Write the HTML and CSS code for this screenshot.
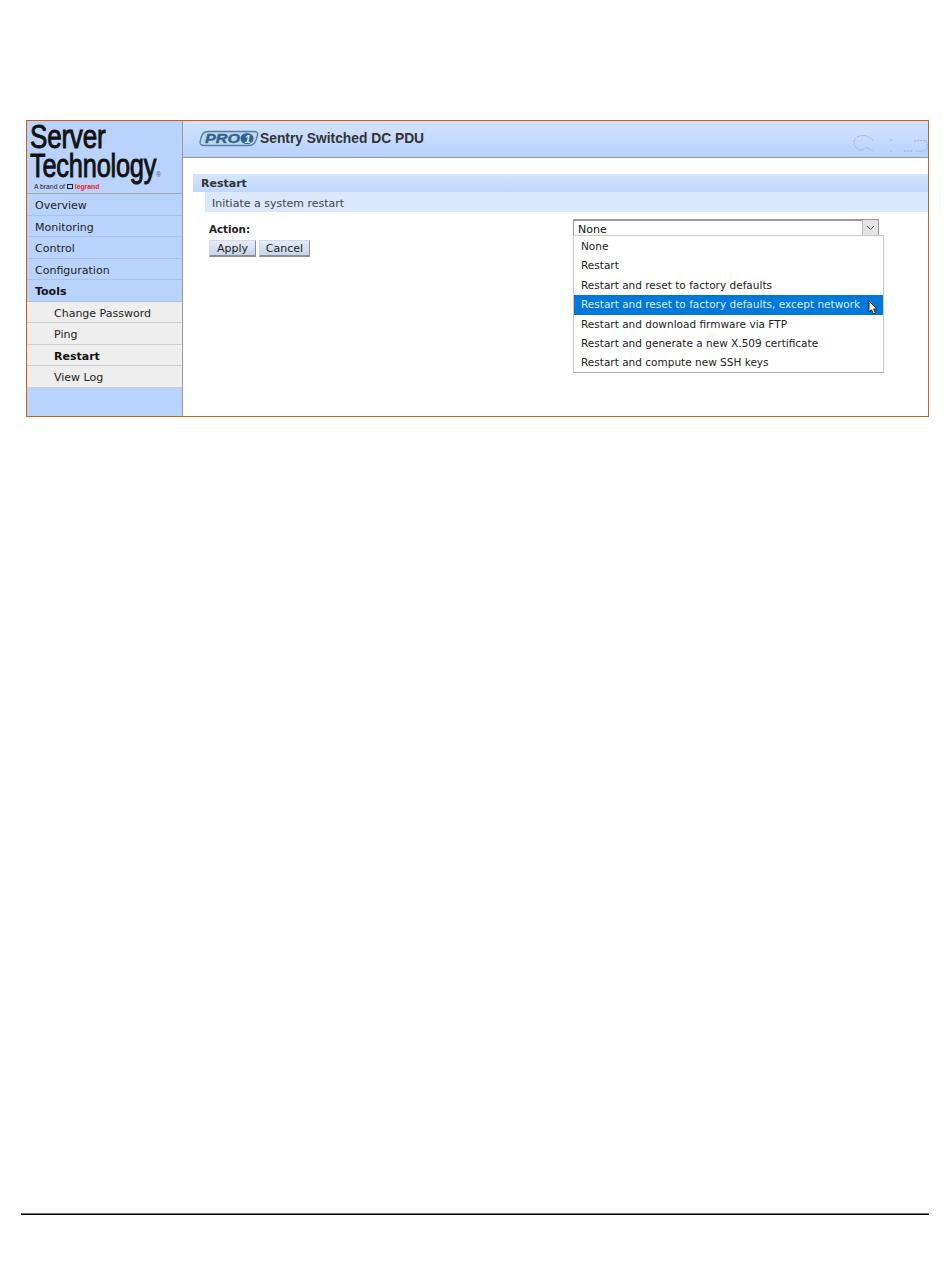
FILE: index.html
```html
<!DOCTYPE html>
<html lang="en">
<head>
<meta charset="utf-8">
<title>Restart</title>
<link rel="stylesheet" href="styles.css">
</head>
<body>
<div class="page">
  <div class="frame">
    <aside class="sidebar">
      <div class="logo">
        <div class="logo-name logo-first">Server</div>
        <div class="logo-name logo-second">Technology<span class="logo-reg">®</span></div>
        <div class="logo-brand">A brand of <span class="logo-box"></span> <span class="logo-red">legrand</span></div>
      </div>
      <nav class="nav">
        <div class="nav-item">Overview</div>
        <div class="nav-item">Monitoring</div>
        <div class="nav-item">Control</div>
        <div class="nav-item">Configuration</div>
        <div class="nav-item nav-bold">Tools</div>
        <div class="nav-item sub">Change Password</div>
        <div class="nav-item sub">Ping</div>
        <div class="nav-item sub nav-bold">Restart</div>
        <div class="nav-item sub">View Log</div>
      </nav>
    </aside>
    <main class="main">
      <header class="header">
        <svg class="pro-logo" width="60" height="17" viewBox="0 0 60 17" aria-hidden="true">
          <path d="M9 1.500H55Q59.500 1.500 58.500 5L57 10Q55 15.500 50 15.500H5Q.5 15.500 1.200 11.500L2.500 6.500Q4 1.500 9 1.500Z" fill="#c3d6e9" stroke="#4f7fa6" stroke-width="1.300"/>
          <text x="6" y="13" class="pro-text" textLength="35" lengthAdjust="spacingAndGlyphs">PRO</text>
          <ellipse cx="48" cy="8.500" rx="6.500" ry="5.500" fill="#2f6493"/>
          <text x="45.500" y="12.500" class="pro-one">1</text>
        </svg>
        <h1 class="title">Sentry Switched DC PDU</h1>
        <svg class="ghost" width="76" height="20" viewBox="0 0 76 20" aria-hidden="true">
          <path d="M21 7Q14 1 8 3Q3 4 2 9Q2 15 8 17Q12 17 14 14Q17 16 21 18M38 7H41M39 18V19M52 18H60M62 8Q70 7 74 8Q76 12 75 16Q72 19 64 18" fill="none" stroke="#a3b0c6" stroke-width="1" stroke-dasharray="2 1"/>
        </svg>
      </header>
      <section class="content">
        <h2 class="section-title">Restart</h2>
        <p class="section-desc">Initiate a system restart</p>
        <form class="form">
          <div class="action-row">
            <span class="action-label">Action:</span>
            <div class="select-wrap">
              <div class="select">
                <span class="select-value">None</span>
                <span class="select-arrow">
                  <svg width="9" height="6" viewBox="0 0 9 6" aria-hidden="true"><path d="M1 1L4.500 4.500L8 1" fill="none" stroke="#555" stroke-width="1"/></svg>
                </span>
              </div>
              <ul class="options">
                <li class="option">None</li>
                <li class="option">Restart</li>
                <li class="option">Restart and reset to factory defaults</li>
                <li class="option selected">Restart and reset to factory defaults, except network</li>
                <li class="option">Restart and download firmware via FTP</li>
                <li class="option">Restart and generate a new X.509 certificate</li>
                <li class="option">Restart and compute new SSH keys</li>
              </ul>
              <svg class="cursor" width="11" height="15" viewBox="0 0 11 15" aria-hidden="true"><path d="M1 1V12L3.500 9.800L5.500 14L7.500 13L5.500 9H9Z" fill="#fff" stroke="#222" stroke-width="1"/></svg>
            </div>
          </div>
          <div class="buttons">
            <button type="button" class="btn btn-apply">Apply</button>
            <button type="button" class="btn btn-cancel">Cancel</button>
          </div>
        </form>
      </section>
    </main>
  </div>
  <div class="footer-rule"></div>
</div>
</body>
</html>
```
FILE: styles.css
```css
* { box-sizing: border-box; }
html, body { margin: 0; padding: 0; background: #fff; }
body { font-family: "DejaVu Sans", Verdana, sans-serif; font-size: 11px; color: #222; }
.page { height: 1267px; padding: 120px 21px 0 26px; display: flex; flex-direction: column; overflow: hidden; }
.frame { width: 903px; height: 297px; flex: none; border: 1px solid #c8601a; display: flex; }
.sidebar { width: 156px; flex: none; background: #b9d3fd; border-right: 1px solid #999; }
.logo { height: 73px; padding: 1px 0 0 3px; border-bottom: 1px solid #a3a9b0; }
.logo-name { width: 150px; font-family: "Liberation Sans", sans-serif; font-size: 33px; line-height: 29px; color: #111; -webkit-text-stroke: .9px #111; white-space: nowrap; transform-origin: left top; }
.logo-first { transform: scaleX(.79); letter-spacing: -.3px; }
.logo-second { transform: scaleX(.77); letter-spacing: -.3px; }
.logo-reg { font-size: 8px; letter-spacing: 0; -webkit-text-stroke: 0; color: #555; }
.logo-brand { font-family: "Liberation Sans", sans-serif; font-size: 6.800px; line-height: 8px; margin: -6px 0 0 4px; color: #222; white-space: nowrap; }
.logo-box { display: inline-block; width: 6px; height: 5px; border: 1.500px solid #222; }
.logo-red { color: #e2231a; font-weight: 700; }
.nav-item { height: 21.500px; line-height: 23px; padding-left: 8px; border-bottom: 1px solid #a9c3e8; color: #222; }
.nav-bold { font-weight: 700; color: #111; }
.sub { background: #eeeeee; padding-left: 27px; border-bottom-color: #cfcfcf; }
.main { flex: 1; min-width: 0; display: flex; flex-direction: column; }
.header { height: 37px; display: flex; align-items: center; gap: 1px; padding: 0 0 2px 16px; background: linear-gradient(#d2e3fe, #b8d2fc); border-bottom: 1px solid #999; position: relative; }
.pro-logo { flex: none; }
.pro-text { font-family: "Liberation Sans", sans-serif; font-size: 13px; font-weight: 700; font-style: italic; fill: #2f6493; stroke: #2f6493; stroke-width: .4px; }
.pro-one { font-family: "Liberation Sans", sans-serif; font-size: 11px; font-weight: 700; font-style: italic; fill: #dce9f5; }
.title { margin: 0; font-family: "Liberation Sans", Arial, sans-serif; font-size: 13.800px; font-weight: 700; color: #333; }
.ghost { position: absolute; right: 0; top: 12px; }
.content { padding: 16px 0 0 10px; }
.section-title { margin: 0; height: 18px; line-height: 20px; padding-left: 8px; font-size: 11px; font-weight: 700; color: #333; background: linear-gradient(#d5e5fe, #bfd7fd); }
.section-desc { margin: 0 0 0 12px; height: 20px; line-height: 23px; padding-left: 7px; background: #d9e8fc; color: #444; font-size: 11px; }
.form { padding: 7px 0 0 16px; }
.action-row { display: flex; height: 21px; }
.action-label { width: 364px; flex: none; padding-top: 3px; font-size: 10.300px; font-weight: 700; line-height: 14px; color: #222; }
.select-wrap { position: relative; width: 306px; }
.select { height: 17px; border: 1px solid #999; border-top-width: 2px; background: #fff; display: flex; justify-content: space-between; }
.select-value { padding-left: 4px; line-height: 17px; color: #111; }
.select-arrow { width: 16px; height: 15px; background: #e4e4e4; border-left: 1px solid #bbb; display: flex; align-items: center; justify-content: center; margin-top: -1px; }
.options { position: absolute; left: 0; top: 16px; width: 311px; height: 138px; margin: 0; padding: 1px 0 0; list-style: none; background: #fff; border: 1px solid #c8c8c8; border-bottom-color: #aaa; z-index: 2; font-size: 10.520px; }
.option { height: 19.400px; line-height: 19.600px; padding-left: 7px; color: #222; white-space: nowrap; }
.selected { background: #0078d7; color: #dcecfa; }
.cursor { position: absolute; left: 295px; top: 81px; z-index: 3; }
.buttons { display: flex; gap: 3px; }
.btn { height: 17px; padding: 0; font: 11px "DejaVu Sans", Verdana, sans-serif; color: #222; background: linear-gradient(#e4ecf8, #c5d5ec); border: 1px solid #d5dbe5; border-right-color: #8a8f98; border-bottom: 2px solid #8a8f98; line-height: 13px; }
.btn-apply { width: 47px; }
.btn-cancel { width: 51px; }
.footer-rule { margin: 796px 0 0 -5px; width: 908px; height: 2px; background: #000; border-top: 1px solid #777; flex: none; }
```
